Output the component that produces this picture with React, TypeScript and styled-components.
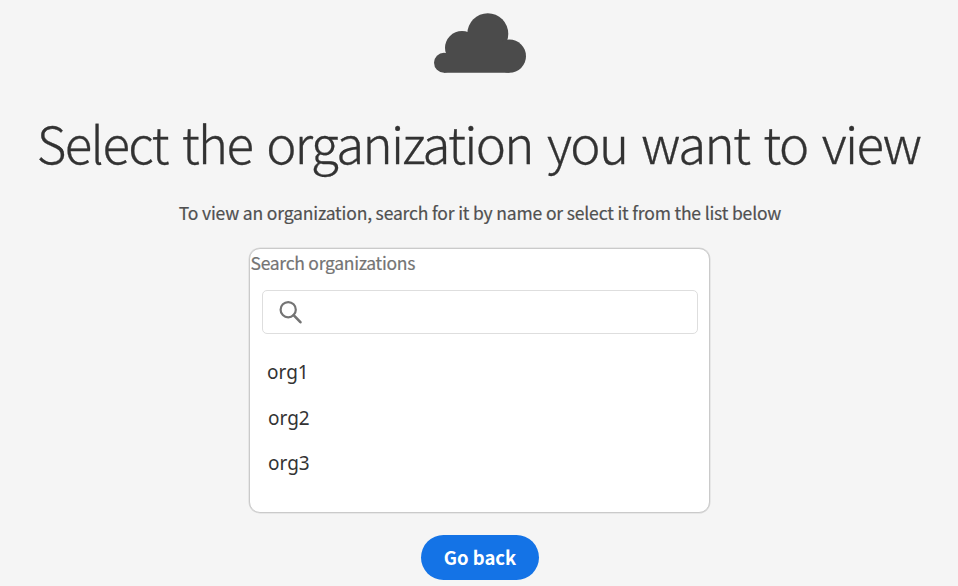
import React from "react";
import styled, { createGlobalStyle } from "styled-components";

const GlobalStyle = createGlobalStyle`
  *, *::before, *::after { box-sizing: border-box; }
  body {
    margin: 0;
    background: #f5f5f5;
    font-family: "Noto Sans CJK SC", "Open Sans", sans-serif;
    color: #323232;
  }
`;

const Page = styled.main`
  display: flex;
  flex-direction: column;
  align-items: center;
  width: 958px;
  height: 586px;
  padding: 13px 0 0 2px;
  overflow: hidden;
`;

const CloudIcon = styled.svg`
  display: block;
  flex: none;
  width: 92px;
  height: 60px;
  fill: #4b4b4b;
`;

const Title = styled.h1`
  flex: none;
  margin: 33px 3px 0 0;
  font-size: 51px;
  font-weight: 300;
  line-height: 72px;
  letter-spacing: -1.65px;
  word-spacing: 4.4px;
  -webkit-text-stroke: 0.3px #323232;
  white-space: nowrap;
`;

const Subtitle = styled.p`
  flex: none;
  margin: 21px 0 0;
  font-size: 17.5px;
  line-height: 28px;
  letter-spacing: -0.16px;
  color: #505050;
  -webkit-text-stroke: 0.2px #505050;
  white-space: nowrap;
`;

const Panel = styled.section`
  flex: none;
  width: 461px;
  height: 265px;
  margin: 21px 2px 0 0;
  background: #fff;
  border: 1px solid #cacaca;
  border-radius: 11px;
  box-shadow: 0 0 0 0.5px #dadada;
`;

const SearchLabel = styled.label`
  display: block;
  height: 41px;
  padding-left: 1px;
  font-size: 17.5px;
  line-height: 28px;
  letter-spacing: -0.28px;
  color: #747474;
  -webkit-text-stroke: 0.2px #747474;
  white-space: nowrap;
`;

const SearchField = styled.div`
  display: flex;
  align-items: center;
  width: 436px;
  height: 44px;
  margin-left: 12px;
  padding-left: 16px;
  border: 1px solid #dedede;
  border-radius: 5px;
`;

const SearchIcon = styled.svg`
  flex: none;
  width: 23px;
  height: 23px;
  fill: none;
  stroke: #747474;
`;

const SearchInput = styled.input`
  flex: 1;
  min-width: 0;
  padding: 0 12px;
  border: 0;
  outline: 0;
  background: none;
  font: inherit;
`;

const OrgList = styled.ul`
  margin: 15px 0 0;
  padding: 0 0 0 17.5px;
  list-style: none;
`;

const OrgItem = styled.li<{ $indent?: number }>`
  height: 45.5px;
  padding-left: ${({ $indent = 0 }) => $indent}px;
  font-family: "Noto Sans", sans-serif;
  font-size: 19px;
  line-height: 46px;
  color: #333;
`;

const BackButton = styled.button`
  flex: none;
  width: 118px;
  height: 45px;
  margin-top: 22px;
  padding: 0;
  border: 0;
  border-radius: 23px;
  background: #1473e6;
  color: #fff;
  font-family: inherit;
  font-size: 18.5px;
  font-weight: 700;
  line-height: 45px;
`;

const organizations = [
  { name: "org1", indent: 0 },
  { name: "org2", indent: 1 },
  { name: "org3", indent: 1 },
];

export default function App() {
  return (
    <>
      <GlobalStyle />
      <Page>
        <CloudIcon viewBox="0 0 92 60" aria-hidden="true">
          <circle cx="10" cy="49.8" r="10" />
          <circle cx="28" cy="35" r="17" />
          <circle cx="53.8" cy="20.8" r="20.5" />
          <circle cx="75.4" cy="43.2" r="16.6" />
          <path d="M10 40H30V25H68V40H75.4V59.8H10Z" />
        </CloudIcon>
        <Title>Select the organization you want to view</Title>
        <Subtitle>To view an organization, search for it by name or select it from the list below</Subtitle>
        <Panel>
          <SearchLabel htmlFor="org-search">Search organizations</SearchLabel>
          <SearchField>
            <SearchIcon viewBox="0 0 23 23" aria-hidden="true">
              <circle cx="9.2" cy="8.7" r="7.6" strokeWidth="2.2" />
              <path d="M14.6 14.2L21.4 21.2" strokeWidth="2.6" strokeLinecap="round" />
            </SearchIcon>
            <SearchInput id="org-search" />
          </SearchField>
          <OrgList>
            {organizations.map((org) => (
              <OrgItem key={org.name} $indent={org.indent}>
                {org.name}
              </OrgItem>
            ))}
          </OrgList>
        </Panel>
        <BackButton type="button">Go back</BackButton>
      </Page>
    </>
  );
}
